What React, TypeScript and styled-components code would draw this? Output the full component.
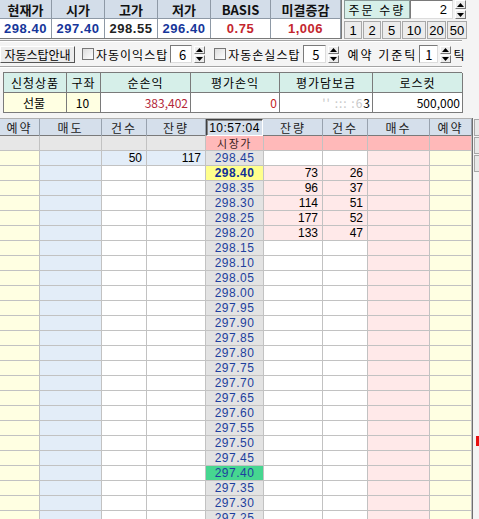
import React from "react";
import styled, { createGlobalStyle } from "styled-components";

const GlobalStyle = createGlobalStyle`
  html, body {
    margin: 0;
    padding: 0;
    background: #f4f4f4;
  }
  body {
    font-family: "Liberation Sans", "Noto Sans CJK KR", sans-serif;
    font-size: 12px;
    color: #000;
  }
  * { box-sizing: border-box; }
`;

const KR = `"Noto Sans CJK KR", "Liberation Sans", sans-serif`;

const Page = styled.div`
  width: 479px;
  height: 519px;
  overflow: hidden;
  background: #f4f4f4;
`;

const TopBar = styled.div`
  display: flex;
  height: 39px;
`;

const QuoteTable = styled.div`
  display: grid;
  grid-template-columns: 52px 53px 53px 53px 60px 70px;
  grid-template-rows: 19px 19px;
  border-bottom: 1px solid #7a7a7a;
  border-right: 1px solid #7a7a7a;
`;

const QuoteHead = styled.div`
  background: #d3dde9;
  border-right: 1px solid #8e99a6;
  border-bottom: 1px solid #8e99a6;
  display: flex;
  align-items: center;
  justify-content: center;
  font-family: ${KR};
  font-weight: bold;
  font-size: 13px;
  color: #111;
`;

const QuoteValue = styled.div<{ $color: string }>`
  background: #fff;
  border-right: 1px solid #8e99a6;
  display: flex;
  align-items: center;
  justify-content: center;
  font-weight: bold;
  font-size: 13px;
  letter-spacing: 0.5px;
  color: ${(p) => p.$color};
`;

const OrderPanel = styled.div`
  margin-left: 2px;
  display: flex;
  flex-direction: column;
  gap: 2px;
`;

const OrderRow = styled.div`
  display: flex;
  align-items: center;
  height: 19px;
`;

const OrderLabel = styled.div`
  width: 66px;
  height: 19px;
  background: #d6efe9;
  border: 1px solid #8a9a98;
  font-family: ${KR};
  font-size: 12px;
  display: flex;
  align-items: center;
  justify-content: center;
  letter-spacing: 2px;
`;

const NumInput = styled.div<{ $w: number; $h: number }>`
  width: ${(p) => p.$w}px;
  height: ${(p) => p.$h}px;
  background: #fff;
  border: 1px solid #7a7a7a;
  border-right-color: #dcdcdc;
  border-bottom-color: #dcdcdc;
  font-size: 13px;
  display: flex;
  align-items: center;
  justify-content: flex-end;
  padding-right: 5px;
`;

const Spinner = styled.div<{ $h: number }>`
  width: 11px;
  height: ${(p) => p.$h}px;
  margin-left: 2px;
  display: flex;
  flex-direction: column;
  gap: 1px;
`;

const SpinBtn = styled.div`
  flex: 1;
  background: #ececec;
  border: 1px solid #fff;
  border-right-color: #777;
  border-bottom-color: #777;
  display: flex;
  align-items: center;
  justify-content: center;
`;

const QtyButtons = styled.div`
  display: flex;
  height: 18px;
`;

const QtyButton = styled.div<{ $w: number }>`
  width: ${(p) => p.$w}px;
  height: 18px;
  background: #ececec;
  border: 1px solid #fff;
  border-right-color: #6a6a6a;
  border-bottom-color: #6a6a6a;
  outline: 1px solid #a8a8a8;
  outline-offset: -1px;
  display: flex;
  align-items: center;
  justify-content: center;
  font-size: 13px;
  margin-right: 1px;
`;

const Separator = styled.div<{ $mt?: number }>`
  width: 462px;
  height: 2px;
  margin-top: ${(p) => p.$mt ?? 0}px;
  border-top: 1px solid #a4a4a4;
  border-bottom: 1px solid #fff;
`;

const Toolbar = styled.div`
  display: flex;
  align-items: center;
  height: 24px;
  font-family: ${KR};
  font-size: 12px;
`;

const GuideButton = styled.div`
  width: 75px;
  height: 17px;
  background: #ececec;
  border: 1px solid #fff;
  border-right-color: #555;
  border-bottom-color: #555;
  display: flex;
  align-items: center;
  justify-content: center;
  font-size: 12px;
`;

const Check = styled.div<{ $ml: number }>`
  width: 12px;
  height: 12px;
  margin-left: ${(p) => p.$ml}px;
  margin-right: 2px;
  background: linear-gradient(135deg, #dcdcdc, #fff);
  border: 1px solid #777;
`;

const ToolLabel = styled.span<{ $ml?: number; $ls?: number }>`
  margin-left: ${(p) => p.$ml ?? 0}px;
  margin-right: 2px;
  letter-spacing: ${(p) => p.$ls ?? 1}px;
  white-space: nowrap;
`;

const PositionTable = styled.div`
  margin: 4px 0 0 3px;
  width: 459px;
  display: grid;
  grid-template-columns: 63px 34px 90px 89px 93px 90px;
  grid-template-rows: 20px 20px;
  border-top: 1px solid #7a7a7a;
  border-left: 1px solid #7a7a7a;
`;

const PosHead = styled.div`
  background: #d6efe9;
  border-right: 1px solid #7a7a7a;
  border-bottom: 1px solid #7a7a7a;
  display: flex;
  align-items: center;
  justify-content: center;
  font-family: ${KR};
  font-size: 12px;
  letter-spacing: 1px;
`;

const PosValue = styled.div<{ $bg: string; $color?: string; $center?: boolean }>`
  background: ${(p) => p.$bg};
  color: ${(p) => p.$color ?? "#000"};
  border-right: 1px solid #7a7a7a;
  border-bottom: 1px solid #7a7a7a;
  display: flex;
  align-items: center;
  justify-content: ${(p) => (p.$center ? "center" : "flex-end")};
  padding-right: 2px;
  font-family: ${KR};
  font-size: 12px;
`;

const Faded = styled.span`
  color: #c8c8c8;
  letter-spacing: 1px;
`;

const BoardArea = styled.div`
  display: flex;
  margin-top: 5px;
`;

const Board = styled.div`
  width: 473px;
  border-right: 1px solid #6f6f6f;
`;

const COLS = "40px 62px 45px 59px 58px 59px 45px 62px 42px";

const HeadRow = styled.div`
  display: grid;
  grid-template-columns: ${COLS};
  height: 18px;
  background: #d5dfeb;
  border-top: 1px solid #b0b0b0;
  border-bottom: 1px solid #7a7a7a;
`;

const HeadCell = styled.div`
  border-right: 1px solid #98a2ae;
  display: flex;
  align-items: center;
  justify-content: center;
  font-family: ${KR};
  font-size: 12px;
  letter-spacing: 2px;
  color: #222;
`;

const TimeCell = styled.div`
  margin: 0 1px 0 0;
  border: 1px solid #404040;
  border-right-color: #fff;
  border-bottom-color: #fff;
  box-shadow: inset 1px 1px 0 #888;
  display: flex;
  align-items: center;
  justify-content: center;
  font-size: 12px;
  letter-spacing: 0.5px;
`;

const Row = styled.div`
  display: grid;
  grid-template-columns: ${COLS};
  height: 15px;
`;

const Cell = styled.div<{ $bg: string }>`
  background: ${(p) => p.$bg};
  border-right: 1px solid #c2c2c2;
  border-bottom: 1px solid #c2c2c2;
  text-align: right;
  padding-right: 4px;
  font-size: 12px;
  line-height: 14px;
  overflow: hidden;
`;

const PriceCell = styled.div<{ $bg: string; $bold?: boolean; $color?: string }>`
  background: ${(p) => p.$bg};
  color: ${(p) => p.$color ?? "#1d3f9e"};
  font-weight: ${(p) => (p.$bold ? "bold" : "normal")};
  font-family: "Liberation Sans", sans-serif;
  border-right: 1px solid #c2c2c2;
  border-bottom: 1px solid #c2c2c2;
  text-align: center;
  font-size: 12px;
  line-height: 14px;
  letter-spacing: 0.5px;
  overflow: hidden;
`;

const MarketCell = styled.div`
  background: #ffb9b9;
  color: #3a1c1c;
  font-family: ${KR};
  border-right: 1px solid #c2c2c2;
  border-bottom: 1px solid #c2c2c2;
  font-size: 11px;
  line-height: 13px;
  display: flex;
  align-items: center;
  justify-content: center;
  letter-spacing: 1.5px;
`;

const SideColumn = styled.div`
  margin-left: 1px;
  width: 6px;
  display: flex;
  flex-direction: column;
  gap: 1px;
  padding-top: 1px;
`;

const SideButton = styled.div`
  height: 17px;
  background: #e8e8e8;
  border: 1px solid #a8a8a8;
  border-right: none;
`;

const RedMark = styled.div`
  margin-top: 263px;
  margin-left: 2px;
  width: 4px;
  height: 10px;
  background: #e81010;
`;

const Arrow = ({ up }: { up: boolean }) => (
  <svg width="7" height="4" viewBox="0 0 7 4">
    <path d={up ? "M3.5 0 L7 4 L0 4 Z" : "M0 0 L7 0 L3.5 4 Z"} fill="#000" />
  </svg>
);

const Spin = ({ h }: { h: number }) => (
  <Spinner $h={h}>
    <SpinBtn>
      <Arrow up />
    </SpinBtn>
    <SpinBtn>
      <Arrow up={false} />
    </SpinBtn>
  </Spinner>
);

const quotes = [
  { label: "현재가", value: "298.40", color: "#16369a" },
  { label: "시가", value: "297.40", color: "#16369a" },
  { label: "고가", value: "298.55", color: "#222" },
  { label: "저가", value: "296.40", color: "#16369a" },
  { label: "BASIS", value: "0.75", color: "#c4262e" },
  { label: "미결증감", value: "1,006", color: "#c4262e" },
];

const qtyButtons = [
  { t: "1", w: 18 },
  { t: "2", w: 18 },
  { t: "5", w: 19 },
  { t: "10", w: 24 },
  { t: "20", w: 19 },
  { t: "50", w: 20 },
];

const asks: Record<string, [number, number]> = { "298.45": [50, 117] };
const bids: Record<string, [number, number]> = {
  "298.40": [73, 26],
  "298.35": [96, 37],
  "298.30": [114, 51],
  "298.25": [177, 52],
  "298.20": [133, 47],
};

const prices = Array.from({ length: 25 }, (_, i) => (298.45 - i * 0.05).toFixed(2));

const YELLOW = "#ffffe2";
const BLUE = "#e3edf8";
const PINK = "#ffe9e9";
const MARKET = "#ffb9b9";

const App = () => {
  return (
    <Page>
      <GlobalStyle />
      <TopBar>
        <QuoteTable>
          {quotes.map((q) => (
            <QuoteHead key={q.label}>{q.label}</QuoteHead>
          ))}
          {quotes.map((q) => (
            <QuoteValue key={q.label} $color={q.color}>
              {q.value}
            </QuoteValue>
          ))}
        </QuoteTable>
        <OrderPanel>
          <OrderRow>
            <OrderLabel>주문 수량</OrderLabel>
            <NumInput $w={43} $h={19}>2</NumInput>
            <Spin h={19} />
          </OrderRow>
          <QtyButtons>
            {qtyButtons.map((b) => (
              <QtyButton key={b.t} $w={b.w}>
                {b.t}
              </QtyButton>
            ))}
          </QtyButtons>
        </OrderPanel>
      </TopBar>
      <Separator $mt={1} />
      <Toolbar>
        <GuideButton>자동스탑안내</GuideButton>
        <Check $ml={7} />
        <ToolLabel>자동이익스탑</ToolLabel>
        <NumInput $w={22} $h={18}>6</NumInput>
        <Spin h={17} />
        <Check $ml={9} />
        <ToolLabel>자동손실스탑</ToolLabel>
        <NumInput $w={23} $h={18}>5</NumInput>
        <Spin h={17} />
        <ToolLabel $ml={9} $ls={2}>
          예약 기준틱
        </ToolLabel>
        <NumInput $w={19} $h={18}>1</NumInput>
        <Spin h={17} />
        <ToolLabel $ml={2}>틱</ToolLabel>
      </Toolbar>
      <Separator />
      <PositionTable>
        <PosHead>신청상품</PosHead>
        <PosHead>구좌</PosHead>
        <PosHead>순손익</PosHead>
        <PosHead>평가손익</PosHead>
        <PosHead>평가담보금</PosHead>
        <PosHead>로스컷</PosHead>
        <PosValue $bg={YELLOW} $center>
          선물
        </PosValue>
        <PosValue $bg={YELLOW} $center>
          10
        </PosValue>
        <PosValue $bg="#fff" $color="#b4283a">
          383,402
        </PosValue>
        <PosValue $bg="#fff" $color="#c41e1e">
          0
        </PosValue>
        <PosValue $bg="#fff">
          <Faded>'' ::: :6</Faded>3
        </PosValue>
        <PosValue $bg="#fff">500,000</PosValue>
      </PositionTable>
      <BoardArea>
        <Board>
          <HeadRow>
            <HeadCell>예약</HeadCell>
            <HeadCell>매도</HeadCell>
            <HeadCell>건수</HeadCell>
            <HeadCell>잔량</HeadCell>
            <TimeCell>10:57:04</TimeCell>
            <HeadCell>잔량</HeadCell>
            <HeadCell>건수</HeadCell>
            <HeadCell>매수</HeadCell>
            <HeadCell>예약</HeadCell>
          </HeadRow>
          <Row>
            <Cell $bg="#e7e7e7" />
            <Cell $bg="#e7e7e7" />
            <Cell $bg="#e7e7e7" />
            <Cell $bg="#e7e7e7" />
            <MarketCell>시장가</MarketCell>
            <Cell $bg={MARKET} />
            <Cell $bg={MARKET} />
            <Cell $bg={MARKET} />
            <Cell $bg={MARKET} />
          </Row>
          {prices.map((p) => {
            const ask = asks[p];
            const bid = bids[p];
            const current = p === "298.40";
            const open = p === "297.40";
            return (
              <Row key={p}>
                <Cell $bg={YELLOW} />
                <Cell $bg={BLUE} />
                <Cell $bg={ask ? BLUE : "#fff"}>{ask ? ask[0] : ""}</Cell>
                <Cell $bg={ask ? BLUE : "#fff"}>{ask ? ask[1] : ""}</Cell>
                <PriceCell
                  $bg={current ? "#ffff8c" : open ? "#46d690" : "#e3e3e3"}
                  $bold={current}
                  $color={current ? "#102f96" : undefined}
                >
                  {p}
                </PriceCell>
                <Cell $bg={bid ? PINK : "#fff"}>{bid ? bid[0] : ""}</Cell>
                <Cell $bg={bid ? PINK : "#fff"}>{bid ? bid[1] : ""}</Cell>
                <Cell $bg={PINK} />
                <Cell $bg={YELLOW} />
              </Row>
            );
          })}
        </Board>
        <SideColumn>
          <SideButton />
          <SideButton />
          <SideButton />
          <RedMark />
        </SideColumn>
      </BoardArea>
    </Page>
  );
};

export default App;
